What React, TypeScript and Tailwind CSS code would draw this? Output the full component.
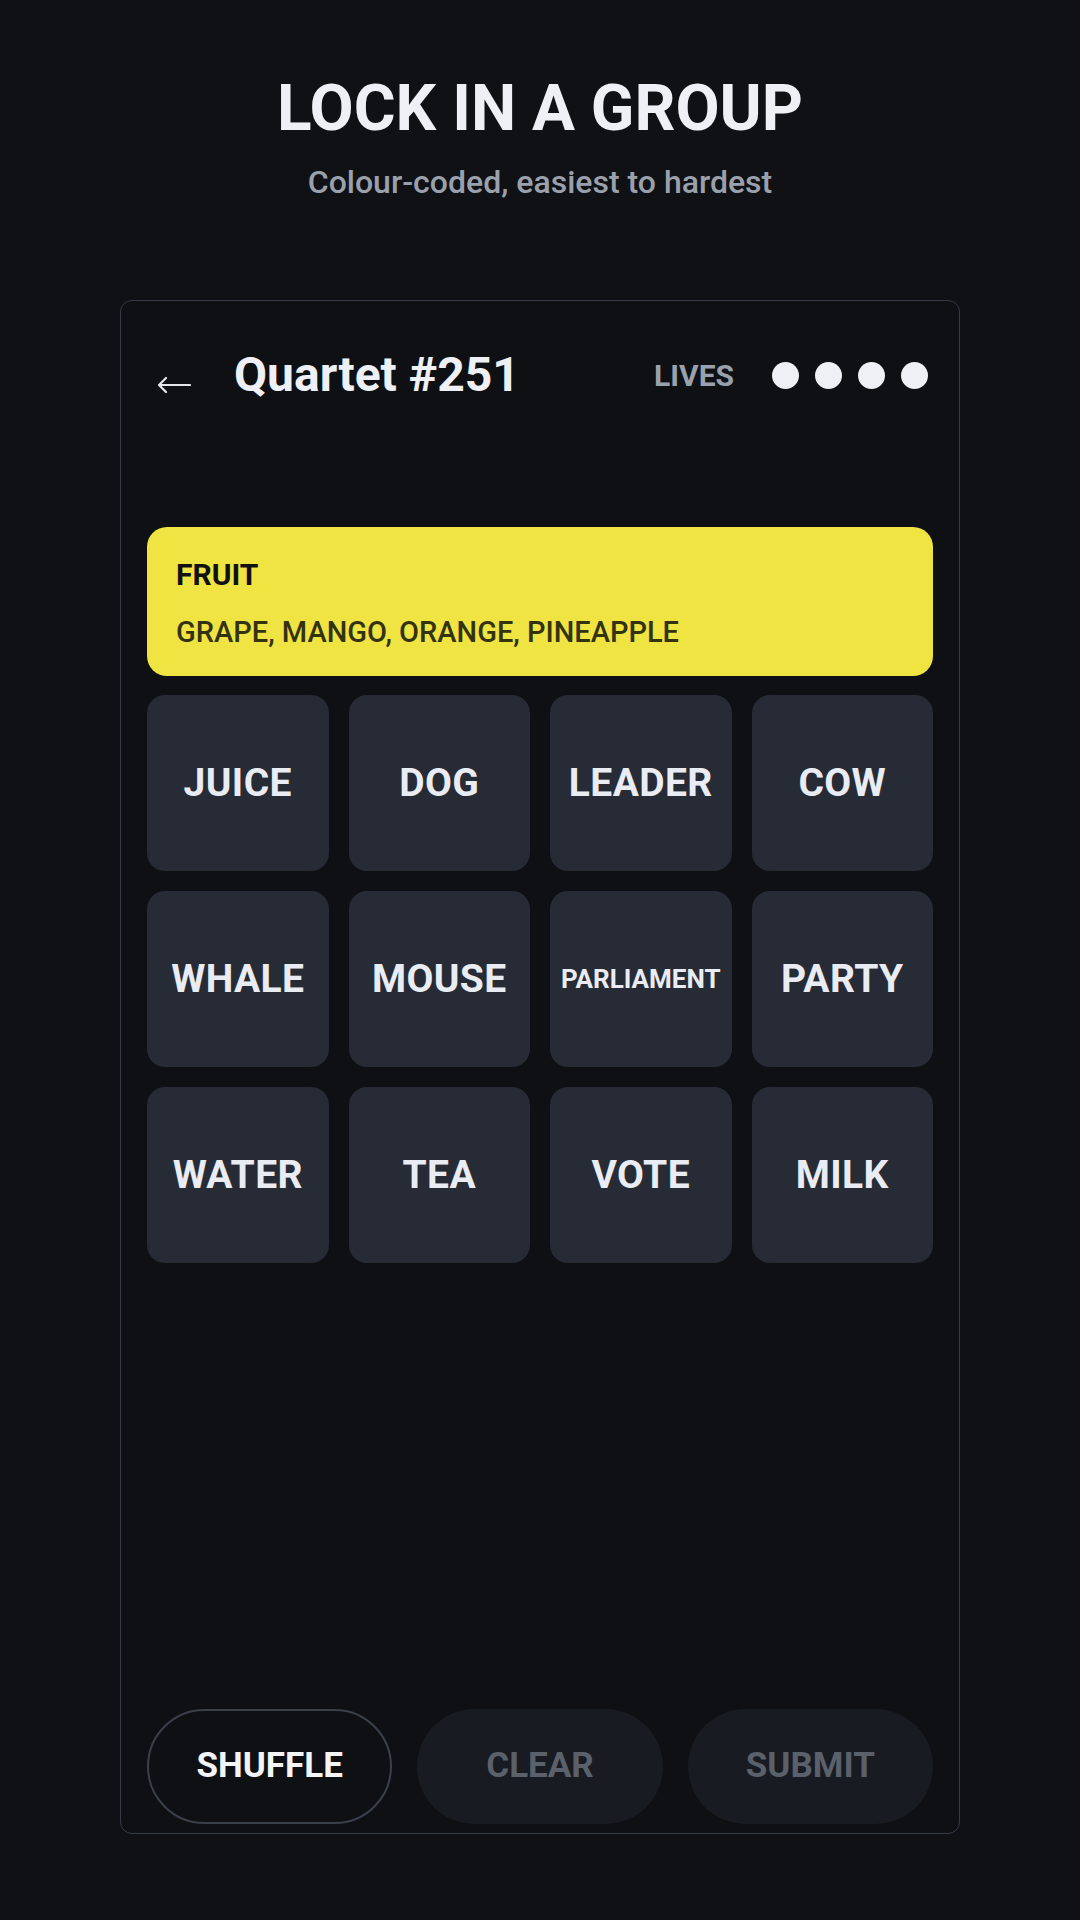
const WORDS = [
  'JUICE', 'DOG', 'LEADER', 'COW',
  'WHALE', 'MOUSE', 'PARLIAMENT', 'PARTY',
  'WATER', 'TEA', 'VOTE', 'MILK',
];

function BackArrow() {
  return (
    <svg width="34" height="18" viewBox="0 0 34 18" fill="none" className="ml-[10px] mt-[20px] shrink-0">
      <path d="M2 9H33M2 9L9 2M2 9L9 16" stroke="#e5e7eb" strokeWidth="2.2" strokeLinecap="round" strokeLinejoin="round" />
    </svg>
  );
}

function Tile({ word }: { word: string }) {
  // long words get shrunk so they fit on one line
  const small = word.length > 8;
  return (
    <div className="h-[176px] rounded-[18px] bg-[#262b35] flex items-center justify-center">
      <span className={small ? 'text-[26px] font-bold text-[#e9ecf3]' : 'text-[39px] font-bold text-[#e9ecf3] tracking-[0.01em]'}>
        {word}
      </span>
    </div>
  );
}

export default function App() {
  return (
    <div className="min-h-[1920px] w-full bg-[#0f1115] flex flex-col items-center font-['Roboto',sans-serif]">
      <h1 className="mt-[77px] text-[64px] leading-[64px] font-bold text-[#eef0f5]">LOCK IN A GROUP</h1>
      <p className="mt-[25px] text-[32px] leading-[32px] font-medium text-[#9aa1ad]">Colour-coded, easiest to hardest</p>

      <div className="mt-[102px] w-[840px] h-[1534px] rounded-xl border border-[#363c47] bg-[#0e1014] px-[26px] pt-[50px] pb-[9px] flex flex-col">
        <div className="flex items-center h-[48px]">
          <BackArrow />
          <span className="ml-[43px] text-[48px] leading-[48px] font-bold text-[#eef0f5]">Quartet #251</span>
          <span className="ml-auto text-[30px] font-bold text-[#9aa1ad]">LIVES</span>
          <div className="ml-[38px] mr-[5px] flex gap-[16px]">
            {[0, 1, 2, 3].map((i) => (
              <div key={i} className="w-[27px] h-[27px] rounded-full bg-[#eef0f5]" />
            ))}
          </div>
        </div>

        <div className="mt-[128px] h-[149px] rounded-[20px] bg-[#f0e443] px-[29px] pt-[33px]">
          <div className="text-[30px] leading-[30px] font-bold text-[#111111]">FRUIT</div>
          <div className="mt-[28px] text-[29px] leading-[29px] font-medium text-[#34330f]">GRAPE, MANGO, ORANGE, PINEAPPLE</div>
        </div>

        <div className="mt-[19px] grid grid-cols-4 gap-x-[20px] gap-y-[20px]">
          {WORDS.map((w) => (
            <Tile key={w} word={w} />
          ))}
        </div>

        <div className="flex-1" />

        <div className="grid grid-cols-3 gap-[25px]">
          <button className="h-[115px] rounded-full border-2 border-[#3a404b] bg-transparent text-[35px] font-bold text-[#f3f4f6]">
            SHUFFLE
          </button>
          <button className="h-[115px] rounded-full bg-[#181b22] text-[35px] font-bold text-[#5b616b]">CLEAR</button>
          <button className="h-[115px] rounded-full bg-[#181b22] text-[35px] font-bold text-[#5b616b]">SUBMIT</button>
        </div>
      </div>
    </div>
  );
}
